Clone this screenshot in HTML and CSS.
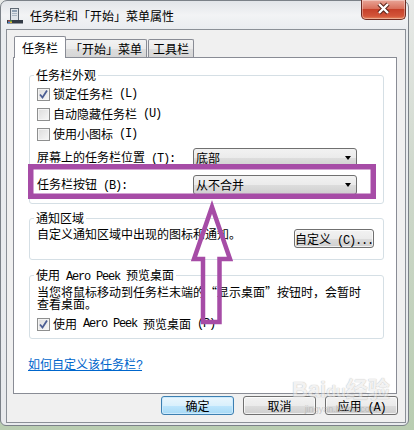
FILE: index.html
```html
<!DOCTYPE html>
<html lang="zh-CN">
<head>
<meta charset="UTF-8">
<title>任务栏和「开始」菜单属性</title>
<link rel="stylesheet" href="styles.css">
</head>
<body>
<div class="screen">
<div class="window">
	<div class="titlebar">
		<svg class="app-icon" width="16" height="16" viewBox="0 0 16 16">
			<rect x="3.5" y="0.5" width="8" height="12" fill="#dfe4e9" stroke="#5f6974"/>
			<rect x="5" y="2" width="5" height="2" fill="#8fa0b2"/>
			<rect x="5" y="5" width="5" height="1" fill="#a9b5c2"/>
			<rect x="5" y="7" width="5" height="1" fill="#a9b5c2"/>
			<rect x="0" y="12" width="16" height="3.5" fill="#323a44"/>
			<rect x="1" y="12.5" width="2" height="1.2" fill="#e5533d"/>
			<rect x="3" y="12.5" width="2" height="1.2" fill="#5bb84a"/>
			<rect x="1" y="13.7" width="2" height="1.2" fill="#3c8ee0"/>
			<rect x="3" y="13.7" width="2" height="1.2" fill="#f2c230"/>
		</svg>
		<span class="title">任务栏和「开始」菜单属性</span>
		<div class="close-btn">
			<svg width="45" height="20" viewBox="0 0 45 20">
				<path d="M18 5 L27 14 M27 5 L18 14" stroke="#5a2419" stroke-width="4.4"/>
				<path d="M18 5 L27 14 M27 5 L18 14" stroke="#fff" stroke-width="2.4"/>
			</svg>
		</div>
	</div>

	<div class="client">
		<div class="tabs">
			<div class="tab active">任务栏</div>
			<div class="tab">「开始」菜单</div>
			<div class="tab last">工具栏</div>
		</div>

		<div class="panel">
			<fieldset class="group appearance">
				<legend>任务栏外观</legend>
				<div class="check-row first"><span class="cb"><svg width="11" height="11" viewBox="0 0 11 11"><path d="M2 5.5 L4.5 8.5 L9 1.5" fill="none" stroke="#4b5d93" stroke-width="1.8"/></svg></span>锁定任务栏<span class="m"> (L)</span></div>
				<div class="check-row"><span class="cb"></span>自动隐藏任务栏<span class="m"> (U)</span></div>
				<div class="check-row"><span class="cb"></span>使用小图标<span class="m"> (I)</span></div>
				<div class="field-row first">
					<span class="field-label">屏幕上的任务栏位置<span class="m"> (T):</span></span>
					<div class="select">底部</div>
				</div>
				<div class="field-row">
					<span class="field-label">任务栏按钮<span class="m"> (B):</span></span>
					<div class="select">从不合并</div>
				</div>
			</fieldset>

			<fieldset class="group notify">
				<legend>通知区域</legend>
				<div class="notify-row">
					<span>自定义通知区域中出现的图标和通知。</span>
					<div class="btn custom">自定义<span class="m"> (C)...</span></div>
				</div>
			</fieldset>

			<fieldset class="group peek">
				<legend>使用<span class="m"> Aero Peek </span>预览桌面</legend>
				<p class="desc">当您将鼠标移动到任务栏末端的“显示桌面”按钮时，会暂时<br>查看桌面。</p>
				<div class="check-row"><span class="cb"><svg width="11" height="11" viewBox="0 0 11 11"><path d="M2 5.5 L4.5 8.5 L9 1.5" fill="none" stroke="#4b5d93" stroke-width="1.8"/></svg></span>使用<span class="m"> Aero Peek </span>预览桌面<span class="m"> (P)</span></div>
			</fieldset>

			<div class="help"><a href="#">如何自定义该任务栏<span class="m">?</span></a></div>
		</div>

		<div class="actions">
			<div class="btn default">确定</div>
			<div class="btn">取消</div>
			<div class="btn">应用<span class="m"> (A)</span></div>
		</div>
	</div>
</div>

<!-- annotation drawn on top of the screenshot -->
<svg class="marks" width="414" height="430" viewBox="0 0 414 430">
	<rect x="30.75" y="166.75" width="342.5" height="29.5" fill="none" stroke="#a64ca6" stroke-width="5.5"/>
	<path d="M212 207 L230 259 L219.5 259 L219.5 322 L203 322 L203 259 L194 259 Z" fill="none" stroke="#a64ca6" stroke-width="4.5" stroke-miterlimit="6"/>
</svg>

<div class="watermark">
	<span class="wm-big">Bai<span class="wm-paw">du</span>经验</span>
	<span class="wm-small">jingyan.baidu.com</span>
</div>
</div>
</body>
</html>
```

FILE: styles.css
```css
* {
	box-sizing: border-box;
}

body {
	margin: 0;
	width: 414px;
	height: 430px;
	overflow: hidden;
	background: linear-gradient(#e8eae8, #cfd8cc 40%, #b9cdb1);
	font-family: "Noto Sans CJK SC", sans-serif;
	font-size: 12px;
	color: #000;
}

.screen {
	position: relative;
	width: 414px;
	height: 430px;
}

/* mono latin bits, half width like the system font */
.m {
	font-family: "Liberation Mono", monospace;
	font-size: 12px;
	letter-spacing: -1.2px;
	white-space: pre;
}

.window {
	width: 409px;
	height: 426px;
	background: linear-gradient(#e2e5e9 0, #f2f3f5 14px, #e9ecef 29px, #e8eaed);
	border: 1px solid #7b8188;
	border-radius: 7px 7px 6px 6px;
}

.titlebar {
	height: 28px;
	display: flex;
	align-items: center;
	padding-left: 6px;
}

.app-icon {
	flex: none;
	margin-top: 1px;
}

.title {
	margin-left: 7px;
	margin-top: 1px;
	line-height: 14px;
}

.close-btn {
	align-self: flex-start;
	margin-left: auto;
	margin-right: 2px;
	margin-top: -1px;
	width: 45px;
	height: 20px;
	border: 1px solid #6e2b21;
	border-top: none;
	border-radius: 0 0 5px 5px;
	background: linear-gradient(#e9a597, #d9715d 45%, #c6412a 50%, #d3553a 85%, #e88a5f);
	box-shadow: inset 0 0 0 1px rgba(255, 255, 255, 0.35);
}

.close-btn svg {
	display: block;
	margin: -1px 0 0 -1px;
}

.client {
	width: 400px;
	height: 394px;
	margin-left: 5px;
	border: 1px solid #8b9097;
	background: #f0f0f0;
	padding: 6px 6px 0 6px;
}

.tabs {
	display: flex;
	align-items: flex-end;
	height: 21px;
}

.tab {
	height: 18px;
	line-height: 17px;
	width: 82px;
	margin-left: -1px;
	text-align: center;
	border: 1px solid #898c95;
	border-bottom: none;
	border-radius: 2px 2px 0 0;
	background: linear-gradient(#f3f3f3, #ebebeb 50%, #dedede 50%, #d6d6d6);
}

.tab.active {
	position: relative;
	z-index: 1;
	width: 52px;
	height: 22px;
	line-height: 21px;
	margin-left: 1px;
	margin-bottom: -1px;
	background: #fff;
}

.tab.last {
	width: 46px;
	margin-left: 1px;
}

.panel {
	width: 384px;
	height: 337px;
	border: 1px solid #898c95;
	background: #fff;
}

.group {
	margin: 0 12px 0 15px;
	padding: 0 0 0 7px;
	min-width: 0;
	border: 1px solid #d5dfe5;
	border-radius: 3px;
}

.group legend {
	padding: 0 2px;
	margin-left: -3px;
	line-height: 14px;
	height: 14px;
}

.appearance {
	margin-top: 10px;
	padding-bottom: 8px;
}

.check-row {
	display: flex;
	align-items: center;
	height: 20px;
	line-height: 14px;
}

.appearance .check-row.first {
	margin-top: 2px;
}

.cb {
	flex: none;
	width: 13px;
	height: 13px;
	margin-right: 3px;
	border: 1px solid #8e8f8f;
	background: linear-gradient(135deg, #dcdcdc, #f7f7f7);
	box-shadow: inset 0 0 0 1px #f4f4f4;
}

.cb svg {
	display: block;
}

.field-row {
	display: flex;
	align-items: center;
	height: 20px;
	margin-top: 7px;
	line-height: 14px;
}

.field-row.first {
	margin-top: 4px;
}

.field-label {
	width: 156px;
	flex: none;
}

.select {
	display: flex;
	align-items: center;
	width: 164px;
	height: 20px;
	padding: 0 5px 0 2px;
	border: 1px solid #707070;
	border-radius: 3px;
	background: linear-gradient(#f2f2f2, #ebebeb 50%, #dddddd 50%, #cfcfcf);
}

.select::after {
	content: "";
	margin-left: auto;
	border-top: 4px solid #000;
	border-left: 3.5px solid transparent;
	border-right: 3.5px solid transparent;
}

.notify {
	margin-top: 7px;
	padding-right: 9px;
	padding-bottom: 11px;
}

.notify-row {
	display: flex;
	justify-content: space-between;
	align-items: flex-start;
	margin-top: 2px;
	line-height: 14px;
}

.btn {
	height: 19px;
	line-height: 17px;
	text-align: center;
	border: 1px solid #707070;
	border-radius: 3px;
	background: linear-gradient(#f2f2f2, #ebebeb 50%, #dddddd 50%, #cfcfcf);
	box-shadow: inset 0 0 0 1px rgba(255, 255, 255, 0.7);
	white-space: nowrap;
}

.btn.custom {
	width: 80px;
	margin-top: 2px;
}

.peek {
	margin-top: 8px;
	padding-bottom: 4px;
}

.desc {
	margin: 4px 0 0 0;
	line-height: 12px;
	white-space: nowrap;
}

.peek .check-row {
	margin-top: 4px;
}

.help {
	margin: 18px 0 0 14px;
	line-height: 14px;
}

.help a {
	color: #0066cc;
	text-decoration: underline;
}

.actions {
	display: flex;
	justify-content: flex-end;
	gap: 9px;
	margin-top: 2px;
	padding-right: 1px;
}

.actions .btn {
	width: 73px;
}

.btn.default {
	border-color: #3c7fb1;
	background: linear-gradient(#eaf6fd, #d9f0fc 50%, #bee6fd 50%, #a7d9f5);
	box-shadow: inset 0 0 0 1px #cdeafc;
}

.marks {
	position: absolute;
	left: 0;
	top: 0;
	pointer-events: none;
}

.watermark {
	position: absolute;
	left: 292px;
	top: 378px;
	display: flex;
	flex-direction: column;
	align-items: center;
	pointer-events: none;
	opacity: 0.55;
}

.wm-big {
	font-family: "Liberation Sans", "Noto Sans CJK SC", sans-serif;
	font-weight: bold;
	font-size: 22px;
	line-height: 24px;
	color: rgba(255, 255, 255, 0.8);
	text-shadow: 0 0 1px #9a9a9a, 0 0 1px #9a9a9a;
}

.wm-paw {
	font-size: 16px;
}

.wm-small {
	font-family: "Liberation Sans", sans-serif;
	font-size: 9px;
	line-height: 11px;
	color: #a8a8a8;
}
```
